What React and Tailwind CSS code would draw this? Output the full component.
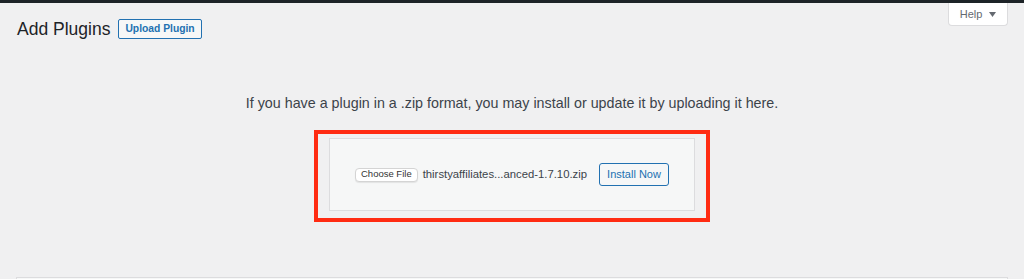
import React from 'react';

const font = { fontFamily: '"Liberation Sans", Arial, sans-serif' };

export default function App() {
  return (
    <div className="w-[1024px] h-[279px] overflow-hidden bg-[#f0f0f1] text-[#3c434a]" style={font}>
      {/* Admin bar edge */}
      <div className="h-[3px] bg-[#1d2327]" />

      {/* Heading row + Help tab */}
      <div className="flex items-start justify-between pl-[17px] pr-[16px]">
        <div className="flex items-center gap-[8px] pt-[16px]">
          <h1 className="text-[17.5px] leading-[20px] font-normal text-[#1d2327]">Add Plugins</h1>
          <button className="h-[20px] px-[6px] border border-[#2271b1] rounded-[2px] bg-[#f6f7f7] text-[#2271b1] text-[10.3px] font-bold leading-none">
            Upload Plugin
          </button>
        </div>
        <button className="w-[60px] h-[23px] flex items-center justify-center gap-[7px] bg-white border border-t-0 border-[#dcdcde] rounded-b-[4px] text-[#646970] text-[11px]">
          <span>Help</span>
          <svg className="w-[7px] h-[5px]" viewBox="0 0 7 5" fill="#646970">
            <path d="M0 0h7L3.5 5z" />
          </svg>
        </button>
      </div>

      {/* Upload area */}
      <div className="flex flex-col items-center">
        <p className="mt-[54px] text-[14.3px] leading-[20px] text-[#3c434a]">
          If you have a plugin in a .zip format, you may install or update it by uploading it here.
        </p>
        <div className="mt-[17px] w-[396px] h-[92px] border-[4px] border-[#ff2b12] px-[11px] pt-[4px] pb-[7px]">
          <div className="h-full flex items-center justify-center gap-[5px] bg-[#f6f7f7] border border-[#dcdcde]">
            <span className="h-[14px] px-[5px] flex items-center bg-white border border-[#d4d4d4] rounded-[4px] shadow-[0_1px_1px_rgba(0,0,0,0.08)] text-[9.5px] text-[#333]">
              Choose File
            </span>
            <span className="text-[11.3px] text-[#3c434a]">thirstyaffiliates...anced-1.7.10.zip</span>
            <button className="ml-[7px] w-[70px] h-[23px] border border-[#2271b1] rounded-[3px] bg-[#f6f7f7] text-[#2271b1] text-[11px]">
              Install Now
            </button>
          </div>
        </div>
      </div>

      {/* Next section edge */}
      <div className="mt-[55px] mx-[16px] h-[20px] border border-[#dcdcde] bg-[#f6f7f7]" />
    </div>
  );
}
